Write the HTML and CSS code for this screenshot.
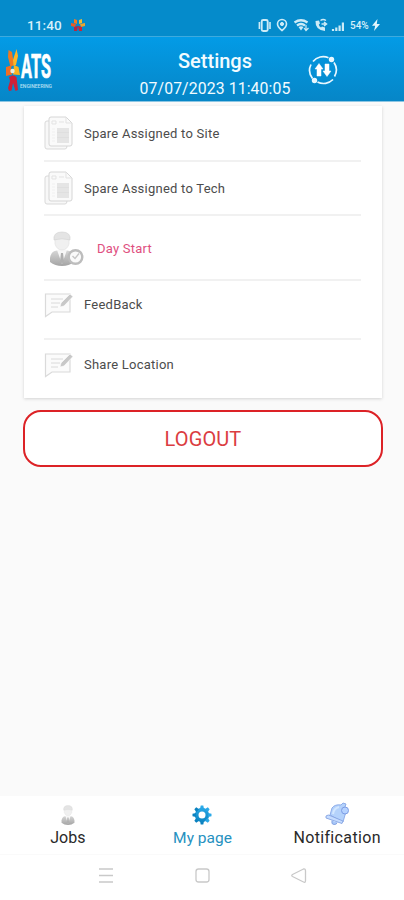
FILE: index.html
```
<!DOCTYPE html>
<html lang="en">
<head>
<meta charset="utf-8">
<title>Settings</title>
<link rel="stylesheet" href="styles.css">
</head>
<body>
<svg width="0" height="0" class="defs">
  <defs>
    <linearGradient id="silver" x1="0" y1="0" x2="0" y2="1"><stop offset="0" stop-color="#d6d6d6"/><stop offset="1" stop-color="#a4a4a4"/></linearGradient>
    <linearGradient id="gear" x1="0" y1="-9" x2="0" y2="9" gradientUnits="userSpaceOnUse"><stop offset="0" stop-color="#2cabea"/><stop offset="1" stop-color="#087fbd"/></linearGradient>
    <symbol id="doc" viewBox="0 0 29 34">
      <path d="M5 5H3Q1 5 1 7V31Q1 33 3 33H21Q23 33 23 30" fill="#f8f8f8" stroke="#d9d9d9"/>
      <path d="M7 1H22L28 7V28Q28 30 26 30H7Q5 30 5 28V3Q5 1 7 1Z" fill="#fafafa" stroke="#d6d6d6"/>
      <path d="M22 1V7H28M8 5H12V8H8ZM15 6H20" fill="none" stroke="#e3e3e3"/>
      <path d="M8 13H11M8 16H11M8 19H11M8 22H11M8 25H11" stroke="#f0f0f0"/>
      <path d="M13 12H25V27H13Z" fill="#e5e5e5"/>
      <path d="M13 16.500H25M13 21.500H25" stroke="#dfdfdf"/>
    </symbol>
    <symbol id="note" viewBox="0 0 30 26">
      <path d="M1.500 2H26V20H8L1.500 24.500Z" fill="#fbfbfb" stroke="#dadada" stroke-width="1.200"/>
      <path d="M7 7H19M7 11H16M7 15H14" stroke="#dadada"/>
      <path d="M16 15L17 11L26 2L29 4.500L20 14Z" fill="#c8c8c8" stroke="#fff" stroke-width=".6"/>
    </symbol>
    <symbol id="person" viewBox="0 0 26 35">
      <path d="M1 27Q2 20 8 19.500H18Q24 20 25 27V31Q20 35 13 35T1 31Z" fill="url(#silver)"/>
      <path d="M8 19L13 33L18 19Z" fill="#f7f7f7"/>
      <path d="M12 22H14L15 30L13 33L11 30Z" fill="#b0b0b0"/>
      <path d="M6 8H20V13Q18 19 13 19T6 13Z" fill="#f0f0f0" stroke="#e2e2e2" stroke-width=".7"/>
      <path d="M5 9Q4 1 13 1T21 9Q13 6 5 9Z" fill="#e4e4e4" stroke="#d2d2d2" stroke-width=".6"/>
    </symbol>
  </defs>
</svg>

<div class="status">
  <span class="clock">11:40</span>
  <svg class="status-app" width="16" height="14" viewBox="0 0 16 14">
    <path d="M4 1L7 2V6L4 5Z" fill="#f57b22"/><path d="M9 2L12 1V5L9 6Z" fill="#f4bd34"/>
    <path d="M1 5L6 6L5 9L1 8Z" fill="#ec5a25"/><path d="M10 6L15 5V8L11 9Z" fill="#eaa431"/>
    <path d="M4 9L8 8L7 13H4Z" fill="#b52742"/><path d="M8 8L12 9V13H9Z" fill="#cb2435"/>
  </svg>
  <svg class="status-icons" width="88" height="16" viewBox="258 17 88 16" fill="none" stroke="#cdebf7">
    <rect x="261.700" y="20" width="6" height="11" rx="1.500" stroke-width="1.900"/><path d="M259.400 22V29M270 22V29" stroke-width="1.600"/>
    <path d="M282 30.500Q277.500 27 277.500 24A4.500 4.500 0 0 1 286.500 24Q286.500 27 282 30.500Z" stroke-width="1.600"/><circle cx="282" cy="24" r="1.600" fill="#cdebf7"/>
    <path d="M294.500 22.500Q301 18 307.500 22.500M297 25.500Q301 22.500 305 25.500" stroke-width="2.300"/><path d="M298.500 27L301 30.500L303.500 27Q301 25.500 298.500 27Z" fill="#cdebf7" stroke="none"/><path d="M306 25V30M304 28L306 30.500L308.500 28" stroke-width="1.200"/>
    <path d="M315.500 21Q315 30 325 31V27.500L322 26.500L321 27.500Q319 26.500 318.800 24.500L320 23.500L319 20.500Z" fill="#cdebf7" stroke="none"/><path d="M320.500 20.500Q323 18.500 326 20.500M321.500 24H326M324 22L326.500 24L324 26" stroke-width="1.500"/>
    <path d="M333 31V29M336.300 31V27.500M339.600 31V25.500M342.900 31V22.500" stroke-width="2.200"/>
  </svg>
  <span class="battery">54%</span>
  <svg class="bolt" width="8" height="12" viewBox="0 0 8 12"><path d="M5.500 0L0 6.800H3.200L2 12L8 5H4.800Z" fill="#e4f5fb"/></svg>
</div>

<header class="header">
  <svg class="logo" width="54" height="50" viewBox="0 0 54 50">
    <path d="M3.500 3L7 5L9 18L5.500 20L3 10Z" fill="#f07920"/><path d="M11.500 2L8 13L8.500 19L11 18L13 9Z" fill="#ffb624"/>
    <path d="M1 20L6 18.500L7 27.500L1 29Z" fill="#f26d22"/><path d="M9 18L13.500 20L15 28L8 27.500Z" fill="#f9b421"/>
    <circle cx="7.500" cy="24" r="2.200" fill="#e6eee5"/>
    <path d="M4 30L7 28.500H9L11.500 30L13 43L10.500 44L8 36L6.500 43.500L4 44L3 41L5 34Z" fill="#cf2038"/>
    <text transform="translate(16 31) scale(1 1.360)" textLength="30" lengthAdjust="spacingAndGlyphs" class="logo-name">ATS</text>
    <text x="15" y="41" textLength="32" lengthAdjust="spacingAndGlyphs" class="logo-tag">ENGINEERING</text>
  </svg>
  <div class="titles"><h1>Settings</h1><time>07/07/2023 11:40:05</time></div>
  <svg class="sync" width="30" height="30" viewBox="0 0 30 30" fill="none" stroke="#e8f7ff" stroke-width="1.700">
    <path d="M4.500 23.500A13.200 13.200 0 0 1 3 9.500M5 6.500A13.200 13.200 0 0 1 20.500 2.800M26 7.500A13.200 13.200 0 0 1 26.500 21.500M25 24.500A13.200 13.200 0 0 1 9.500 27"/>
    <circle cx="23.500" cy="4.500" r="2.700" fill="#e8f7ff" stroke="none"/><circle cx="6.500" cy="25.500" r="2.700" fill="#e8f7ff" stroke="none"/>
    <path d="M11 8.500L15 14H13V21H9V14H7ZM19 21.500L15 16H17V9H21V16H23Z" fill="#fff" stroke="#fff" stroke-width=".5"/>
  </svg>
</header>

<main class="content">
  <section class="card">
    <div class="row r1"><svg class="doc"><use href="#doc"/></svg><span>Spare Assigned to Site</span></div>
    <div class="row r2"><svg class="doc"><use href="#doc"/></svg><span>Spare Assigned to Tech</span></div>
    <div class="row r3">
      <svg class="day" viewBox="0 0 35 35"><use href="#person" width="26" height="35"/><circle cx="26.500" cy="26" r="6.800" fill="#fafafa" stroke="#bdbdbd" stroke-width="2.400"/><path d="M23.500 25L26 27.500L30 22.500" fill="none" stroke="#c6c6c6" stroke-width="1.400"/></svg>
      <span>Day Start</span>
    </div>
    <div class="row r4"><svg class="note"><use href="#note"/></svg><span>FeedBack</span></div>
    <div class="row r5"><svg class="note"><use href="#note"/></svg><span>Share Location</span></div>
  </section>
  <button class="logout">LOGOUT</button>
</main>

<nav class="tabs">
  <div class="tab jobs"><svg width="14" height="20" viewBox="0 0 26 35" preserveAspectRatio="none"><use href="#person" width="26" height="35"/></svg><span>Jobs</span></div>
  <div class="tab active"><svg width="20" height="20" viewBox="-10 -10 20 20">
    <g fill="url(#gear)"><circle r="7.200"/><path d="M-2-6L-1.300-9.500H1.300L2-6ZM-2 6L-1.300 9.500H1.300L2 6Z"/><path d="M-2-6L-1.300-9.500H1.300L2-6ZM-2 6L-1.300 9.500H1.300L2 6Z" transform="rotate(45)"/><path d="M-2-6L-1.300-9.500H1.300L2-6ZM-2 6L-1.300 9.500H1.300L2 6Z" transform="rotate(90)"/><path d="M-2-6L-1.300-9.500H1.300L2-6ZM-2 6L-1.300 9.500H1.300L2 6Z" transform="rotate(135)"/></g><circle r="3.500" fill="#fff"/></svg><span>My page</span></div>
  <div class="tab notice"><svg width="25" height="24" viewBox="0 0 25 24">
    <path d="M5 13L7 6Q10 2 16 3L18 1L21 2L20 5Q23 9 20 13L18 20Z" fill="#b4d2fb" stroke="#86a6e6" stroke-width=".9"/>
    <path d="M1 14Q3 12 6 14L18 19L17 21.500L1 16Z" fill="#c5dcff" stroke="#86a4e2" stroke-width=".9"/><path d="M7 18.500Q6 22.500 9 22.500T12 20.500" fill="#a9c9fa" stroke="#86a4e2"/>
    <path d="M8 12Q9 6 14 5" fill="none" stroke="#d3e7ff" stroke-width="2"/><circle cx="20" cy="8.500" r="3.500" fill="#b5d2ff" stroke="#7c9ce4"/>
  </svg><span>Notification</span></div>
</nav>
<div class="system">
  <svg width="202" height="18" viewBox="0 0 202 18" fill="none" stroke="#c9c9c9" stroke-width="1.300">
    <path d="M0 3H14M0 9.500H14M0 16H14"/>
    <rect x="97" y="3" width="13" height="13" rx="2.500"/>
    <path d="M204.500 3Q206.500 2.500 206.500 5V14.500Q206.500 17 204.500 16L193.500 10.500Q192 9.500 193.500 8.500Z" stroke-linejoin="round"/>
  </svg>
</div>
</body>
</html>
```
FILE: styles.css
```
* { box-sizing: border-box; }
body { margin: 0; width: 404px; height: 900px; overflow: hidden; display: flex; flex-direction: column; background: #fafafa; font-family: Roboto, sans-serif; }
.defs { position: absolute; }
.status { height: 37px; flex: none; display: flex; align-items: center; padding: 14px 0 0 27px; background: #058bcb; border-bottom: 1px solid #3eaade; color: #d8f0fa; }
.clock { width: 36px; font-size: 13.500px; font-weight: 500; letter-spacing: .1px; }
.status-app { margin-left: 7px; }
.status-icons { margin-left: 172px; }
.battery { margin-left: 4px; width: 22px; font-size: 10px; font-weight: 500; }
.header { height: 65px; flex: none; display: flex; background: linear-gradient(#039be6, #0686c7); border-bottom: 1px solid #8cc6e3; color: #f1fbff; }
.logo { margin: 10px 0 0 5px; flex: none; overflow: visible; }
.logo-name { font: 700 24px Roboto, sans-serif; fill: #fff; stroke: #fff; stroke-width: .5px; }
.logo-tag { font: 500 5px Roboto, sans-serif; fill: #b9e0f3; }
.titles { margin-left: 71px; width: 170px; display: flex; flex-direction: column; align-items: center; padding-top: 11px; }
h1 { margin: 0; font-size: 20px; line-height: 27px; font-weight: 500; }
time { font-size: 15.800px; line-height: 27px; letter-spacing: .1px; white-space: nowrap; }
.sync { margin: 18px 0 0 8px; }
.content { flex: 1; padding: 4px 22px 0 24px; }
.card { width: 358px; height: 292px; background: #fff; box-shadow: 0 1px 3px #d3d3d3; padding: 0 21px 0 20px; }
.row { display: flex; align-items: center; border-bottom: 2px solid #f1f1f1; width: 317px; font-size: 13px; letter-spacing: .24px; color: #4c4c4c; }
.row svg { flex: none; }
.r1 { height: 56px; }
.r2 { height: 54px; }
.r3 { height: 65px; padding: 2px 0 0 5px; color: #e04f7f; }
.r4 { height: 59px; padding-bottom: 10px; }
.r5 { height: 58px; padding-bottom: 9px; border: 0; }
.doc { width: 29px; height: 34px; margin-right: 11px; }
.day { width: 35px; height: 35px; margin-right: 13px; }
.note { width: 30px; height: 26px; margin-right: 10px; }
.logout { display: block; width: 360px; height: 57px; margin: 12px 0 0 -1px; padding: 0; border: 2px solid #dc2226; border-radius: 18px; background: #fff; color: #db3d41; font: 400 20px Roboto, sans-serif; letter-spacing: .1px; }
.tabs { height: 59px; flex: none; display: flex; background: #fff; border-bottom: 1px solid #fafafa; }
.tab { width: 134.670px; display: flex; flex-direction: column; align-items: center; font-size: 16px; line-height: 20px; color: #292929; padding: 9px 0 0 1px; }
.tab span { margin-top: 3px; }
.active { color: #2691bf; font-size: 15.500px; }
.notice { padding: 6px 0 0 1px; }
.notice span { margin-top: 2px; letter-spacing: .35px; }
.system { height: 45px; flex: none; background: #fff; display: flex; padding: 11px 0 0 99px; }
.system svg { overflow: visible; }
```
